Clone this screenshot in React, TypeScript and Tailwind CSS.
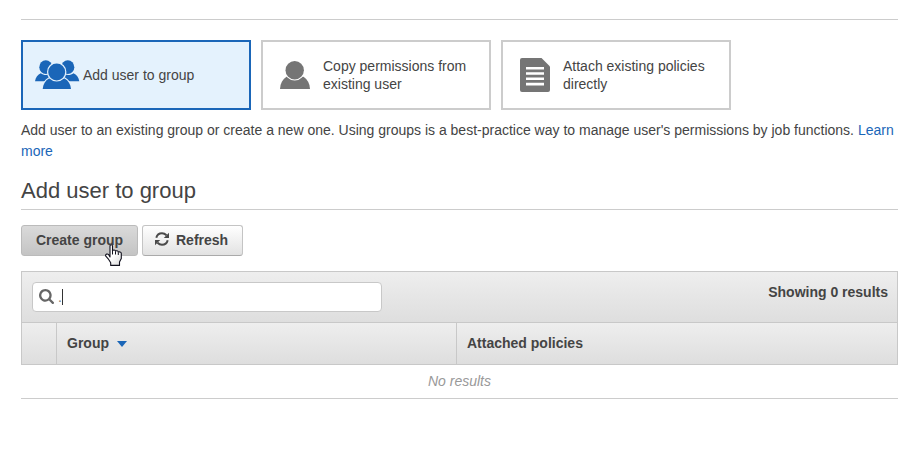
import React from "react";

function GroupIcon() {
  return (
    <svg width="45" height="30" viewBox="0 0 45 30" fill="#1a66b8" className="shrink-0">
      <ellipse cx="10.8" cy="7.2" rx="6.5" ry="6.9" />
      <ellipse cx="32.8" cy="7.2" rx="6.5" ry="6.9" />
      <path d="M0 21.300C.6 17.500 2.800 14.600 5.800 13.300 8.500 15.400 12 15.600 15 14L19 21.300Z" />
      <path d="M44.300 21.300C43.700 17.500 41.500 14.600 38.500 13.300 35.800 15.400 32.300 15.600 29.300 14L25.300 21.300Z" />
      <path
        d="M7.700 29C8.200 24 10.200 20.400 14 18.400H29.600C33.400 20.400 35.500 24 36 29Z"
        stroke="#e4f2fd"
        strokeWidth="2.200"
        className="[paint-order:stroke]"
      />
      <circle cx="21.700" cy="11.900" r="8.500" stroke="#e4f2fd" strokeWidth="2.400" className="[paint-order:stroke]" />
    </svg>
  );
}

function UserIcon() {
  return (
    <svg width="30" height="28" viewBox="0 0 30 28" fill="#757575" className="shrink-0">
      <path d="M0 28C.3 22.500 2.500 18.200 6.500 15.800H23.500C27.500 18.200 29.700 22.500 30 28Z" />
      <circle cx="14.700" cy="9.300" r="9.200" stroke="#fff" strokeWidth="2.200" className="[paint-order:stroke]" />
    </svg>
  );
}

function DocumentIcon() {
  return (
    <svg width="30" height="34" viewBox="0 0 30 34" className="shrink-0">
      <path d="M2 0H21.500L30 8.500V32a2 2 0 0 1-2 2H2a2 2 0 0 1-2-2V2a2 2 0 0 1 2-2Z" fill="#757575" />
      <path d="M6 9h18v2.500H6ZM6 14.200h18v2.600H6ZM6 19.500h18v2.500H6ZM6 24.800h18v2.600H6Z" fill="#fff" />
    </svg>
  );
}

function RefreshIcon() {
  return (
    <svg width="14" height="14" viewBox="0 0 14 14" fill="none" stroke="#4a4a4a" strokeWidth="2" className="-mt-px shrink-0">
      <path d="M1.300 5.800C2 3 4.300 1.300 7 1.300 8.900 1.300 10.300 2.100 11.500 3.300" />
      <path d="M12.700 8.200C12 11 9.700 12.700 7 12.700 5.100 12.700 3.700 11.900 2.500 10.700" />
      <path d="M14 .8V6H8.800ZM0 13.200V8H5.200Z" fill="#4a4a4a" stroke="none" />
    </svg>
  );
}

function SearchIcon() {
  return (
    <svg width="15" height="15" viewBox="0 0 1664 1664" fill="#666" className="-mt-[2px] shrink-0">
      <path d="M1152 704q0-185-131.500-316.500t-316.500-131.500-316.500 131.500-131.500 316.500 131.500 316.500 316.500 131.500 316.500-131.500 131.500-316.500zm512 832q0 52-38 90t-90 38q-54 0-90-38l-343-342q-179 124-399 124-143 0-273.500-55.500t-225-150-150-225-55.500-273.500 55.500-273.500 150-225 225-150 273.500-55.500 273.500 55.500 225 150 150 225 55.500 273.500q0 220-124 399l343 343q37 37 37 90z" />
    </svg>
  );
}

function HandCursor() {
  return (
    <svg width="17" height="22" viewBox="0 0 17 22" className="absolute left-[83px] top-[18px]">
      <defs>
        <linearGradient id="hand" x1="0" y1="0" x2="1" y2="1">
          <stop offset="0.5" stopColor="#fff" />
          <stop offset="1" stopColor="#d8d8d8" />
        </linearGradient>
      </defs>
      <path
        d="M5 13V2C5 .3 7.500.3 7.500 2V7C7.800 5.600 10.500 5.600 10.500 7.300 11 6.400 13.300 6.600 13.300 8.200 14 7.600 16.300 8 16.300 9.500V14.500L14.500 18V21.400H5.700V18.800L3.200 14.800.6 11.800C.3 10 2.500 9.500 3.700 10.700Z"
        fill="url(#hand)"
        stroke="#10101c"
        strokeWidth="1.100"
        strokeLinejoin="round"
      />
      <path d="M7.500 7V10.500M10.500 7.500V10.500M13.300 8.500V11" stroke="#10101c" strokeWidth="1" />
    </svg>
  );
}

export default function App() {
  return (
    <main className="h-[449px] w-[902px] overflow-hidden bg-white pl-[21px] pr-[4px] pt-[19px] font-['Liberation_Sans',Arial,sans-serif] text-sm text-[#444]">
      <hr className="border-[#ccc]" />

      <div className="mt-5 flex gap-2.5 leading-[18px]">
        <button className="flex h-[70px] w-[230px] items-center border-2 border-[#1a66b8] bg-[#e4f2fd] pl-3 text-left">
          <GroupIcon />
          <span className="ml-[3px]">Add user to group</span>
        </button>
        <button className="flex h-[70px] w-[230px] items-center gap-[13px] border-2 border-[#ccc] pl-[17px] text-left">
          <UserIcon />
          <span>Copy permissions from<br />existing user</span>
        </button>
        <button className="flex h-[70px] w-[230px] items-center gap-[13px] border-2 border-[#ccc] pl-[17px] text-left">
          <DocumentIcon />
          <span>Attach existing policies<br />directly</span>
        </button>
      </div>

      <p className="mt-[10px] leading-[21px]">
        Add user to an existing group or create a new one. Using groups is a best-practice way to manage user's permissions by job functions.{" "}
        <a className="text-[#1a66b8]">Learn<br />more</a>
      </p>

      <h2 className="mt-[14px] h-[34px] border-b border-[#ccc] text-[22px] leading-[30px]">Add user to group</h2>

      <div className="mt-[15px] flex gap-1 font-bold">
        <button className="relative h-[31px] w-[117px] rounded-[3px] border border-[#bbb] bg-linear-to-b from-[#dadada] to-[#c4c4c4] pb-[2px]">
          Create group
          <HandCursor />
        </button>
        <button className="flex h-[31px] w-[101px] items-center gap-[7px] rounded-[3px] border border-[#c4c4c4] border-b-[#aaa] bg-linear-to-b from-white to-[#e2e2e2] pb-[2px] pl-3">
          <RefreshIcon />
          Refresh
        </button>
      </div>

      <section className="mt-[15px] border-b border-[#ccc]">
        <div className="flex h-[51px] justify-between border border-b-0 border-[#c8c8c8] bg-linear-to-b from-[#eee] to-[#dedede] p-[10px]">
          <div className="flex h-[30px] w-[350px] items-center rounded-[4px] border border-[#c8c8c8] bg-white pl-[6px]">
            <SearchIcon />
            <span className="ml-1 text-[#777]">.</span>
            <span className="h-4 w-px bg-[#333]" />
          </div>
          <span className="-mr-px h-5 font-bold leading-5">Showing 0 results</span>
        </div>
        <div className="flex h-[43px] border border-[#c8c8c8] bg-linear-to-b from-[#eee] to-[#dedede] font-bold">
          <div className="w-[35px] border-r border-[#c8c8c8]" />
          <div className="flex w-[400px] items-center border-r border-[#c8c8c8] pb-[2px] pl-[10px]">
            Group
            <svg width="10" height="6" viewBox="0 0 10 6" className="ml-2 mt-[3px]" fill="#1a66b8">
              <path d="M0 0H10L5 6Z" />
            </svg>
          </div>
          <div className="flex items-center pb-[2px] pl-[10px]">Attached policies</div>
        </div>
        <div className="h-[33px] text-center italic leading-8 text-[#999]">No results</div>
      </section>
    </main>
  );
}
